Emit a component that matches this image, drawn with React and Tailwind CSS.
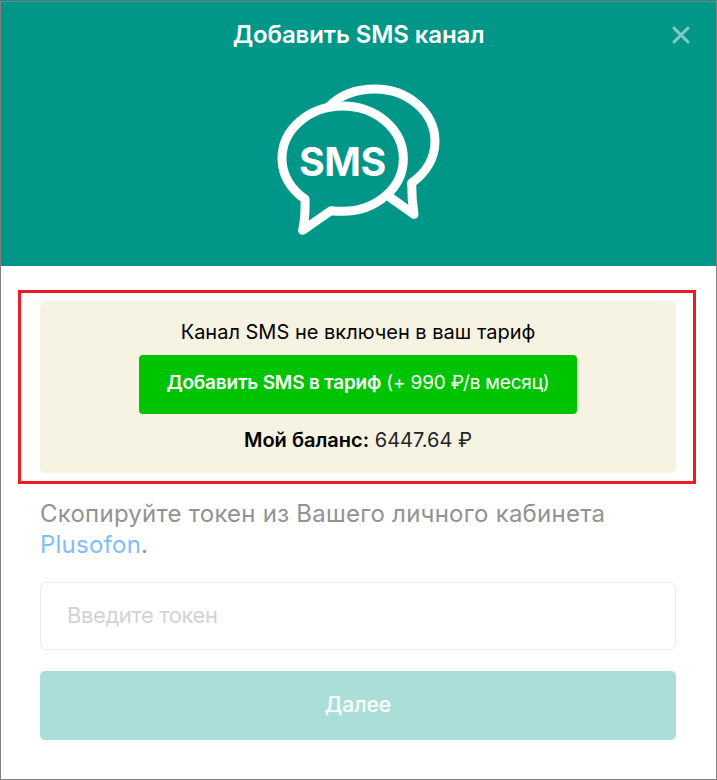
import { useState } from 'react'

const SmsIcon = () => (
  <svg viewBox="50 43 489 453" width="163" height="151" fill="none" aria-hidden="true">
    <g stroke="#fff" strokeWidth="27" strokeLinecap="round" strokeLinejoin="round">
      <path d="M208 109C240 77 288 58 344 58A180 158 0 0 1 524 214C524 264 498 309 454 340C454 372 456 403 461 434L392 385" />
      <path d="M134 388C92 360 65 316 65 267A182 158 0 0 1 247 109A182 158 0 0 1 429 267A182 158 0 0 1 247 425Q229 425 212 423L127 482C134 450 135 420 134 388Z" />
    </g>
    <text
      x="116"
      y="318"
      textLength="262"
      fill="#fff"
      fontFamily="Inter, sans-serif"
      fontSize="118"
      fontWeight="650"
    >
      SMS
    </text>
  </svg>
)

const CloseIcon = () => (
  <svg viewBox="0 0 18 18" className="w-[18px] h-[18px]" fill="none" stroke="currentColor" strokeWidth="3" strokeLinecap="round">
    <path d="M2 2l14 14M16 2L2 16" />
  </svg>
)

const Header = () => (
  <header className="relative flex h-[264px] flex-col items-center bg-[#009788] text-white">
    <h1 className="mt-[18px] text-[24px] leading-[30px] font-semibold tracking-[-0.1px] whitespace-nowrap">
      Добавить SMS канал
    </h1>
    <button aria-label="Закрыть" className="absolute top-[24px] right-[26px] text-[#80cbc4]">
      <CloseIcon />
    </button>
    <div className="mt-[34px] mr-px">
      <SmsIcon />
    </div>
  </header>
)

const TariffNotice = () => (
  <section className="mt-[24px] mr-[20px] ml-[17px] h-[194px] border-[3px] border-[#ed1c24] pt-[8px] pr-[17px] pl-[19px]">
    <div className="flex h-[172px] flex-col items-center rounded-md bg-[#f7f3e3] pt-[16px] text-[20px] text-black whitespace-nowrap">
      <p className="leading-[30px]">Канал SMS не включен в ваш тариф</p>
      <button className="mt-[8px] h-[59px] w-[438px] rounded-[4px] bg-[#00c400] pb-[2px] text-[19px] tracking-[-0.2px] text-white">
        <span className="font-semibold">Добавить SMS в тариф</span> (+ 990 ₽/в месяц)
      </button>
      <p className="mt-[11px] leading-[30px]">
        <span className="font-semibold">Мой баланс:</span>{' '}
        <span className="text-[#212529]">6447.64 ₽</span>
      </p>
    </div>
  </section>
)

const App = () => {
  const [token, setToken] = useState('')

  return (
    <div className="h-[780px] w-[717px] bg-[#009788] pt-px font-['Inter',sans-serif]">
      <main className="h-[779px] border border-[#808080] bg-white">
        <Header />
        <TariffNotice />
        <div className="pt-[14px] pr-[40px] pl-[39px]">
          <p className="text-[24px] leading-[31px] tracking-[0.24px] text-[#929292] whitespace-nowrap">
            Скопируйте токен из Вашего личного кабинета
            <br />
            <a href="#" className="text-[#80bdff]">Plusofon</a>.
          </p>
          <input
            value={token}
            onChange={(e) => setToken(e.target.value)}
            placeholder="Введите токен"
            className="mt-[22px] block h-[68px] w-full rounded-md border border-[#ebebeb] px-[26px] pb-[2px] text-[22px] tracking-[-0.4px] outline-none placeholder:text-[#d3d3d3]"
          />
          <button className="mt-[21px] block h-[69px] w-full rounded-[5px] bg-[#acded9] pb-[2px] text-[21px] font-medium text-white">
            Далее
          </button>
        </div>
      </main>
    </div>
  )
}

export default App
